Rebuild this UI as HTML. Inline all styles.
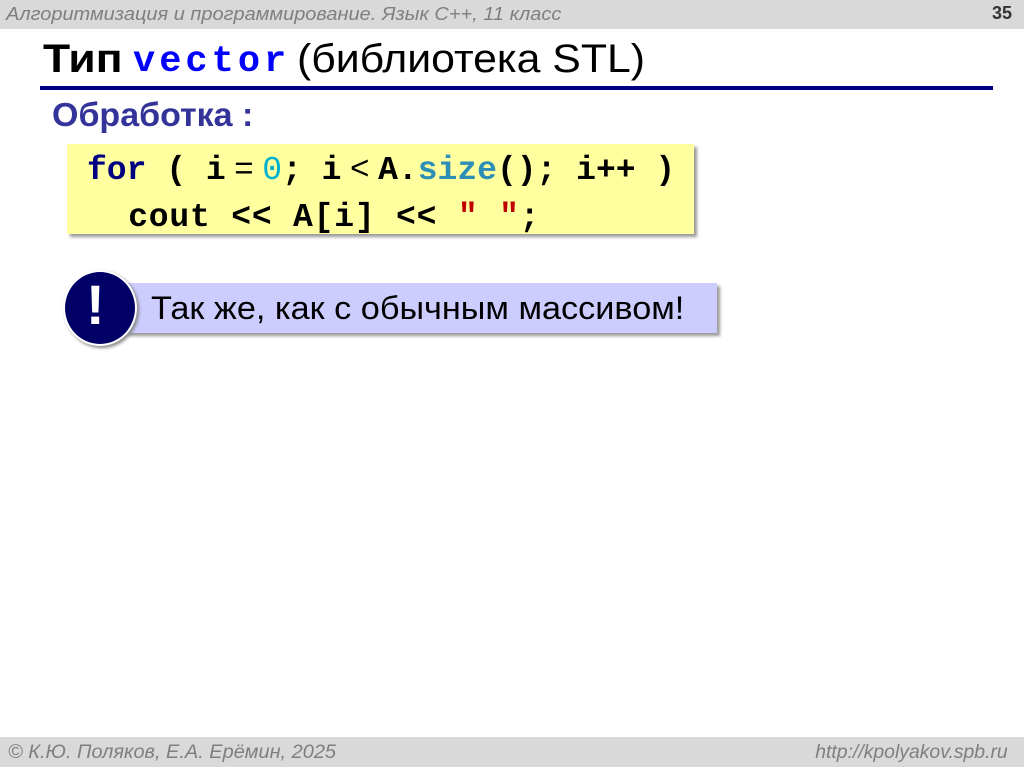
<!DOCTYPE html>
<html><head><meta charset="utf-8"><style>
body{margin:0;width:1024px;height:767px;position:relative;background:#fff;overflow:hidden;font-family:"Liberation Sans",sans-serif}
.a{position:absolute;white-space:nowrap}
.mono{font-family:"Liberation Mono",monospace}
.s{font-size:14px}
</style></head><body>
<div class="a" style="left:0;top:0;width:1024px;height:29px;background:#d9d9d9"></div>
<div class="a" style="left:6px;top:4px;font-size:18px;font-style:italic;color:#7f7f7f;transform-origin:0 0;transform:scaleX(1.11)">Алгоритмизация и программирование. Язык С++, 11 класс</div>
<div class="a" style="left:992px;top:3px;font-size:18px;font-weight:bold;color:#333">35</div>
<div class="a" style="left:43px;top:37px;font-size:40px;font-weight:bold;color:#000;transform-origin:0 0;transform:scaleX(1.11)">Тип</div>
<div class="a mono" style="left:133px;top:41px;font-size:37px;font-weight:bold;color:#0000ff;letter-spacing:4px">vector</div>
<div class="a" style="left:297px;top:37px;font-size:40px;color:#000;transform-origin:0 0;transform:scaleX(1.07)">(библиотека STL)</div>
<div class="a" style="left:40px;top:86px;width:953px;height:4px;background:#000080"></div>
<div class="a" style="left:52px;top:96px;font-size:33px;font-weight:bold;color:#333399;transform-origin:0 0;transform:scaleX(1.03)">Обработка :</div>
<div class="a" style="left:67px;top:144px;width:627px;height:90px;background:#ffff9f;box-shadow:3px 3px 3px #999"></div>
<div class="a mono" style="left:87px;top:150px;font-size:33px;line-height:41px;color:#000;font-weight:bold"><span style="color:#000080">for</span> ( i<span class="s"> </span><span style="font-weight:normal">=</span><span class="s"> </span><span style="color:#00b0d0;font-weight:normal">0</span>; i<span class="s"> </span><span style="font-weight:normal">&lt;</span><span class="s"> </span>A.<span style="color:#2d8fb5">size</span>(); i++ )<br><span style="letter-spacing:0.8px">&nbsp;&nbsp;cout &lt;&lt; A[i] &lt;&lt; <span style="color:#c00000">" "</span>;</span></div>
<div class="a" style="left:125px;top:283px;width:592px;height:50px;background:#ccccff;box-shadow:3px 3px 3px #999"></div>
<div class="a" style="left:63px;top:270px;width:70px;height:72px;border-radius:50%;background:#000066;border:2px solid #fff;box-shadow:2px 2px 3px #888"></div>
<div class="a" style="left:86px;top:272px;font-size:56px;font-weight:bold;color:#fff">!</div>
<div class="a" style="left:151px;top:290px;font-size:32px;color:#000;transform-origin:0 0;transform:scaleX(1.07)">Так же, как с обычным массивом!</div>
<div class="a" style="left:0;top:737px;width:1024px;height:30px;background:#d9d9d9"></div>
<div class="a" style="left:8px;top:742px;font-size:19px;font-style:italic;color:#7f7f7f;transform-origin:0 0;transform:scaleX(1.05)">© К.Ю. Поляков, Е.А. Ерёмин, 2025</div>
<div class="a" style="right:16px;top:742px;font-size:19px;font-style:italic;color:#7f7f7f;transform-origin:100% 0;transform:scaleX(1.02)">http://kpolyakov.spb.ru</div>
</body></html>
